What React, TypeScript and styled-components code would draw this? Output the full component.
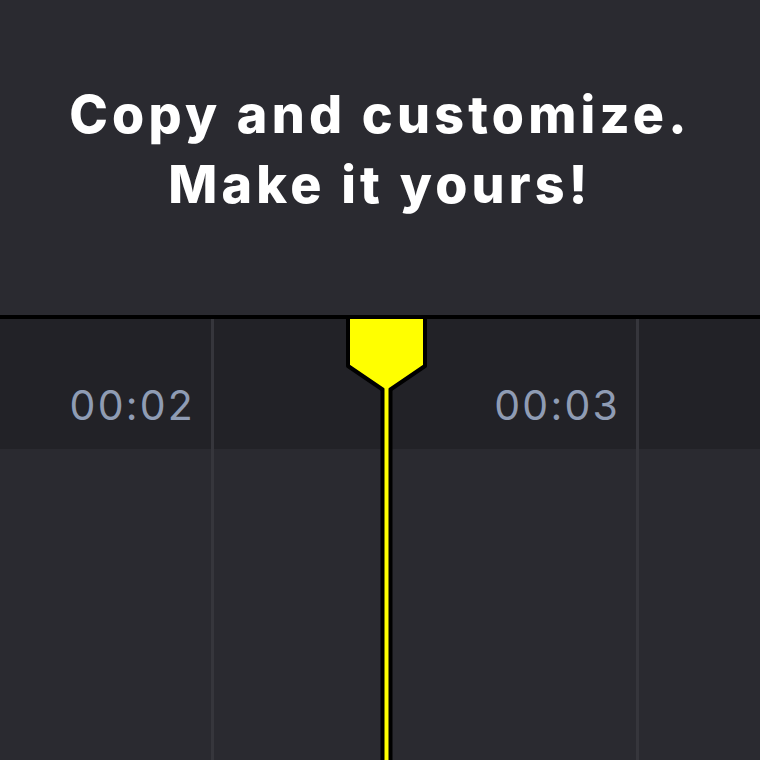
import styled, { createGlobalStyle } from "styled-components"

const GlobalStyle = createGlobalStyle`
html, body {
  margin: 0;
  padding: 0;
  background: #2a2a30;
}
`

const Page = styled.div`
width: 760px;
height: 760px;
display: flex;
flex-direction: column;
overflow: hidden;
background: #2a2a30;
font-family: Inter, "Liberation Sans", sans-serif;
`

const Header = styled.header`
height: 315px;
flex-shrink: 0;
display: flex;
align-items: center;
justify-content: center;
padding-bottom: 16px;
box-sizing: border-box;
`

const Title = styled.h1`
margin: 0;
color: #fff;
font-size: 52px;
line-height: 70px;
font-weight: 800;
text-align: center;
letter-spacing: 4.2px;
`

const Timeline = styled.div`
flex: 1;
position: relative;
border-top: 4px solid #000;
overflow: hidden;
`

const Columns = styled.div`
display: flex;
height: 100%;
margin-left: -211px;
`

const Column = styled.div`
width: 425px;
flex-shrink: 0;
display: flex;
flex-direction: column;
border-right: 3px solid #36363c;
box-sizing: border-box;
`

const RulerCell = styled.div`
height: 130px;
background: #222227;
display: flex;
align-items: flex-end;
justify-content: flex-end;
padding: 0 16px 20px 0;
box-sizing: border-box;
`

const Label = styled.span`
color: #8f9cb4;
font-size: 41px;
line-height: 48px;
letter-spacing: 2.2px;
`

const TrackCell = styled.div`
flex: 1;
`

const Playhead = styled.svg`
position: absolute;
left: 346px;
top: 0;
`

const seconds = [
  { id: 2, label: "00:02" },
  { id: 3, label: "00:03" },
  { id: 4 },
]

export default function App() {
  return (
    <>
      <GlobalStyle />
      <Page>
        <Header>
          <Title>
            Copy and customize.
            <br />
            Make it yours!
          </Title>
        </Header>
        <Timeline>
          <Columns>
            {seconds.map((s) => (
              <Column key={s.id}>
                <RulerCell>
                  {s.label && <Label>{s.label}</Label>}
                </RulerCell>
                <TrackCell />
              </Column>
            ))}
          </Columns>
          <Playhead width="81" height="441" viewBox="0 0 81 441">
            <rect x="34.5" y="50" width="12" height="391" fill="#000" />
            <polygon
              points="2,-4 79,-4 79,47 43,71.5 38,71.5 2,47"
              fill="#ffff00"
              stroke="#000"
              strokeWidth="4"
              strokeLinejoin="round"
            />
            <rect x="38.5" y="62" width="4" height="379" fill="#ffff00" />
          </Playhead>
        </Timeline>
      </Page>
    </>
  )
}
